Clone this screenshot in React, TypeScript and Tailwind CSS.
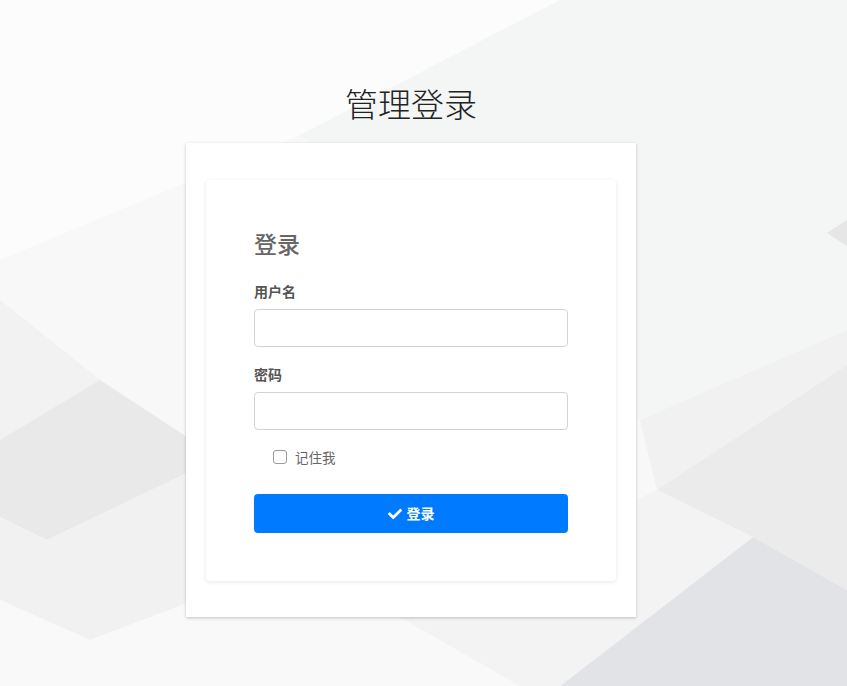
import { FaCheck } from "react-icons/fa";

const cjk = { fontFamily: '"Noto Sans CJK SC", "Noto Sans", sans-serif' };

function Background() {
  return (
    <svg
      className="absolute inset-0 h-full w-full"
      viewBox="0 0 847 686"
      preserveAspectRatio="none"
    >
      <rect width="847" height="686" fill="#f8f8f8" />
      <polygon points="0,0 560,0 300,135 0,260" fill="#fcfcfc" />
      <polygon points="300,135 560,0 847,0 847,330 640,420" fill="#f4f5f5" />
      <polygon points="0,300 100,380 0,440" fill="#f2f2f2" />
      <polygon points="0,440 100,380 187,437 187,473 47,540 0,517" fill="#e9e9e9" />
      <polygon points="0,517 47,540 187,473 300,560 90,640 0,600" fill="#f1f1f1" />
      <polygon points="0,600 90,640 300,560 520,686 0,686" fill="#f9f9f9" />
      <polygon points="640,420 847,330 847,365 657,490" fill="#f1f1f1" />
      <polygon points="657,490 847,365 847,590 753,537" fill="#ebebeb" />
      <polygon points="560,686 753,537 847,590 847,686" fill="#e2e3e7" />
      <polygon points="300,560 520,686 560,686 753,537 657,490 636,500" fill="#f3f3f4" />
      <polygon points="827,233 847,220 847,246" fill="#e6e6e6" />
    </svg>
  );
}

export default function App() {
  return (
    <div className="relative h-[686px] w-full overflow-hidden" style={cjk}>
      <Background />
      <div className="relative flex flex-col items-center pr-[25px] pt-[83px]">
        <h1 className="mb-[20px] text-[33px] leading-[40px] font-light text-[#222]">
          管理登录
        </h1>

        {/* 外层卡片 */}
        <div className="w-[450px] bg-white px-5 pt-[37px] pb-[36px] shadow-[0_1px_3px_rgba(0,0,0,0.22)]">
          <form
            className="flex flex-col rounded-[4px] bg-white px-12 pt-[47px] pb-12 shadow-[0_1px_4px_rgba(0,0,0,0.1)]"
            onSubmit={(e) => e.preventDefault()}
          >
            <h2 className="text-[23px] leading-8 font-medium text-[#666]">登录</h2>

            <label className="mt-[22px] text-[14px] leading-5 font-bold text-[#555]">
              用户名
            </label>
            <input
              type="text"
              className="mt-2 h-[38px] w-full rounded-[4px] border border-[#ced4da] px-3 text-[14px] text-[#495057] outline-none"
            />

            <label className="mt-[17px] text-[14px] leading-5 font-bold text-[#555]">
              密码
            </label>
            <input
              type="password"
              className="mt-2 h-[38px] w-full rounded-[4px] border border-[#ced4da] px-3 text-[14px] text-[#495057] outline-none"
            />

            <label className="mt-[17px] flex h-5 items-center pl-[19px]">
              <input
                type="checkbox"
                className="h-[14px] w-[14px] appearance-none rounded-[3px] border border-[#9a9a9a] bg-white"
              />
              <span className="ml-2 text-[13.5px] leading-5 text-[#666]">记住我</span>
            </label>

            <button
              type="submit"
              className="mt-[27px] flex h-[39px] w-full items-center justify-center gap-[5px] rounded-[4px] bg-[#007bff] text-[14px] font-bold text-white"
            >
              <FaCheck className="h-[14px] w-[14px]" />
              登录
            </button>
          </form>
        </div>
      </div>
    </div>
  );
}
